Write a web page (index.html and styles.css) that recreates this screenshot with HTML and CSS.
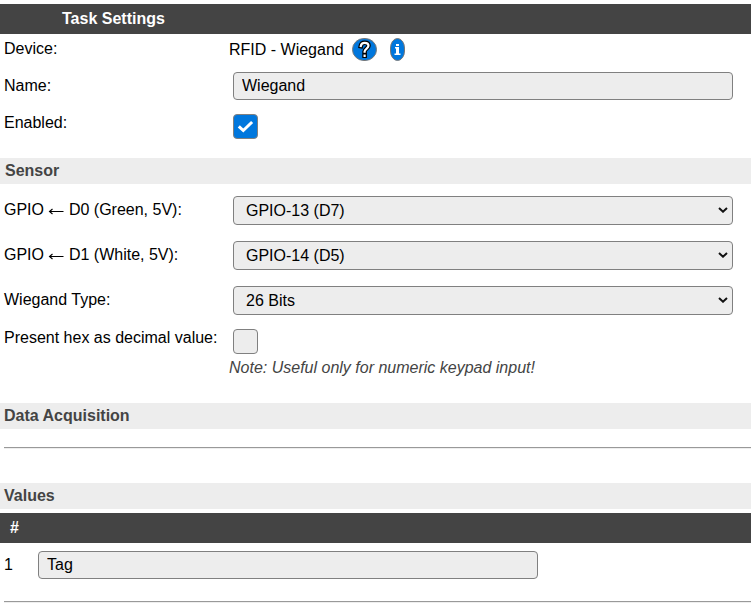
FILE: index.html
```html
<!DOCTYPE html>
<html lang="en">
<head>
<meta charset="utf-8">
<title>Task Settings</title>
<link rel="stylesheet" href="styles.css">
</head>
<body>
<form>
  <h1 class="bar bar-title">Task Settings</h1>
  <div class="row row-device">
    <span class="label">Device:</span>
    <div class="value device">
      <span class="device-name">RFID - Wiegand</span>
      <svg class="help" width="25" height="23" viewBox="0 0 25 23" role="img" aria-label="Help">
        <rect x=".5" y=".5" width="24" height="22" rx="11.5" ry="11" fill="#0077dd" stroke="#777"/>
        <g fill="none" stroke-linecap="square">
          <path d="M8.800 8C9.200 5.600 10.700 4.800 12.700 4.800c2.300 0 3.800 1.100 3.800 3 0 2.500-3.900 3-3.900 5.800M12.600 17.500v.3" stroke="#000" stroke-width="4.600"/>
          <path d="M8.800 8C9.200 5.600 10.700 4.800 12.700 4.800c2.300 0 3.800 1.100 3.800 3 0 2.500-3.900 3-3.900 5.800M12.600 17.500v.3" stroke="#fff" stroke-width="2.200"/>
        </g>
      </svg>
      <svg class="info" width="15" height="23" viewBox="0 0 15 23" role="img" aria-label="Information">
        <rect x=".5" y=".5" width="14" height="22" rx="7" ry="9.500" fill="#0077dd" stroke="#777"/>
        <path fill="#fff" d="M6 6h3v2H6zM5 9h4v6.500h1.500V17h-6v-1.500H6v-5H5z"/>
      </svg>
    </div>
  </div>
  <div class="row row-name">
    <label class="label" for="name">Name:</label>
    <input class="field" id="name" type="text" value="Wiegand">
  </div>
  <div class="row row-enabled">
    <span class="label">Enabled:</span>
    <span class="check checked" role="checkbox" aria-checked="true">
      <svg width="23" height="23" viewBox="0 0 23 23"><path d="M4.800 11.300l4.500 4.200 8.800-8.500" fill="none" stroke="#fff" stroke-width="3"/></svg>
    </span>
  </div>

  <h2 class="section section-sensor">Sensor</h2>
  <div class="row row-select">
    <span class="label">GPIO <svg class="arrow" width="16" height="8" viewBox="0 0 16 8"><path d="M15.500 4.500H1.500M4.500 2L1.500 4.500l3 2.500" fill="none" stroke="#000" stroke-width="1.100"/></svg> D0 (Green, 5V):</span>
    <div class="field select"><span>GPIO-13 (D7)</span><svg width="10" height="6" viewBox="0 0 10 6"><path d="M1 1l4 3.700L9 1" fill="none" stroke="#111" stroke-width="2"/></svg></div>
  </div>
  <div class="row row-select">
    <span class="label">GPIO <svg class="arrow" width="16" height="8" viewBox="0 0 16 8"><path d="M15.500 4.500H1.500M4.500 2L1.500 4.500l3 2.500" fill="none" stroke="#000" stroke-width="1.100"/></svg> D1 (White, 5V):</span>
    <div class="field select"><span>GPIO-14 (D5)</span><svg width="10" height="6" viewBox="0 0 10 6"><path d="M1 1l4 3.700L9 1" fill="none" stroke="#111" stroke-width="2"/></svg></div>
  </div>
  <div class="row row-select">
    <span class="label">Wiegand Type:</span>
    <div class="field select"><span>26 Bits</span><svg width="10" height="6" viewBox="0 0 10 6"><path d="M1 1l4 3.700L9 1" fill="none" stroke="#111" stroke-width="2"/></svg></div>
  </div>
  <div class="row row-hex">
    <span class="label">Present hex as decimal value:</span>
    <div class="value">
      <span class="check" role="checkbox" aria-checked="false"></span>
      <p class="note">Note: Useful only for numeric keypad input!</p>
    </div>
  </div>

  <h2 class="section">Data Acquisition</h2>
  <hr class="rule rule-data">
  <h2 class="section">Values</h2>
  <div class="bar bar-values">#</div>
  <div class="row-tag">
    <span class="index">1</span>
    <input class="field" type="text" value="Tag">
  </div>
  <hr class="rule">
</form>
</body>
</html>
```
FILE: styles.css
```css
* {
  box-sizing: border-box;
}

body {
  margin: 0;
  padding-top: 4px;
  overflow: hidden;
  background: #fff;
  color: #000;
  font: 16px/18px "Liberation Sans", Arial, sans-serif;
}

.bar {
  height: 30px;
  margin: 0;
  background: #444;
  color: #fff;
  font-size: 16px;
  font-weight: bold;
  line-height: 29px;
}

.bar-title {
  padding-left: 62px;
}

.bar-values {
  margin-top: 4px;
  padding-left: 10px;
}

.section {
  height: 26px;
  margin: 0;
  padding-left: 4px;
  background: #ededed;
  color: #444;
  font-size: 16px;
  line-height: 25px;
}

.section-sensor {
  padding-left: 5px;
}

.row {
  display: grid;
  grid-template-columns: 225px 1fr;
  align-items: start;
  padding-left: 4px;
}

.row > .field,
.check {
  margin-left: 4px;
}

.label {
  white-space: nowrap;
}

.row-device {
  height: 34px;
}

.row-device .label {
  padding-top: 6px;
}

.device {
  display: flex;
  padding-top: 4px;
}

.device-name {
  padding-top: 3px;
}

.help {
  margin-left: 8px;
}

.info {
  margin-left: 13px;
}

.row-name {
  height: 42px;
  padding-top: 4px;
}

.row-name .label {
  padding-top: 5px;
}

.row-enabled {
  height: 48px;
  padding-top: 4px;
}

.row-select {
  height: 45px;
  padding-top: 12px;
}

.row-select .label {
  padding-top: 5px;
}

.row-hex {
  height: 84px;
  padding-top: 10px;
}

.field {
  width: 500px;
  height: 28px;
  padding: 0 8px;
  border: 1px solid #808080;
  border-radius: 4px;
  background: #ededed;
  color: #000;
  font: inherit;
}

.select {
  display: flex;
  align-items: center;
  justify-content: space-between;
  height: 29px;
  padding: 0 4px 1px 12px;
}

.select span {
  padding-top: 2px;
}

.check {
  display: block;
  width: 25px;
  height: 25px;
  border: 1px solid #808080;
  border-radius: 4px;
  background: #ededed;
}

.check svg {
  display: block;
}

.checked {
  background: #0077dd;
}

.note {
  margin: 5px 0 0;
  color: #444;
  font-style: italic;
}

.rule {
  height: 2px;
  margin: 0 0 0 4px;
  border: 0;
  border-top: 1px solid #999;
  border-bottom: 1px solid #eee;
}

.rule-data {
  margin-top: 18px;
  margin-bottom: 34px;
}

.row-tag {
  display: grid;
  grid-template-columns: 34px 1fr;
  height: 58px;
  padding: 8px 0 0 4px;
}

.index {
  padding-top: 5px;
}
```
